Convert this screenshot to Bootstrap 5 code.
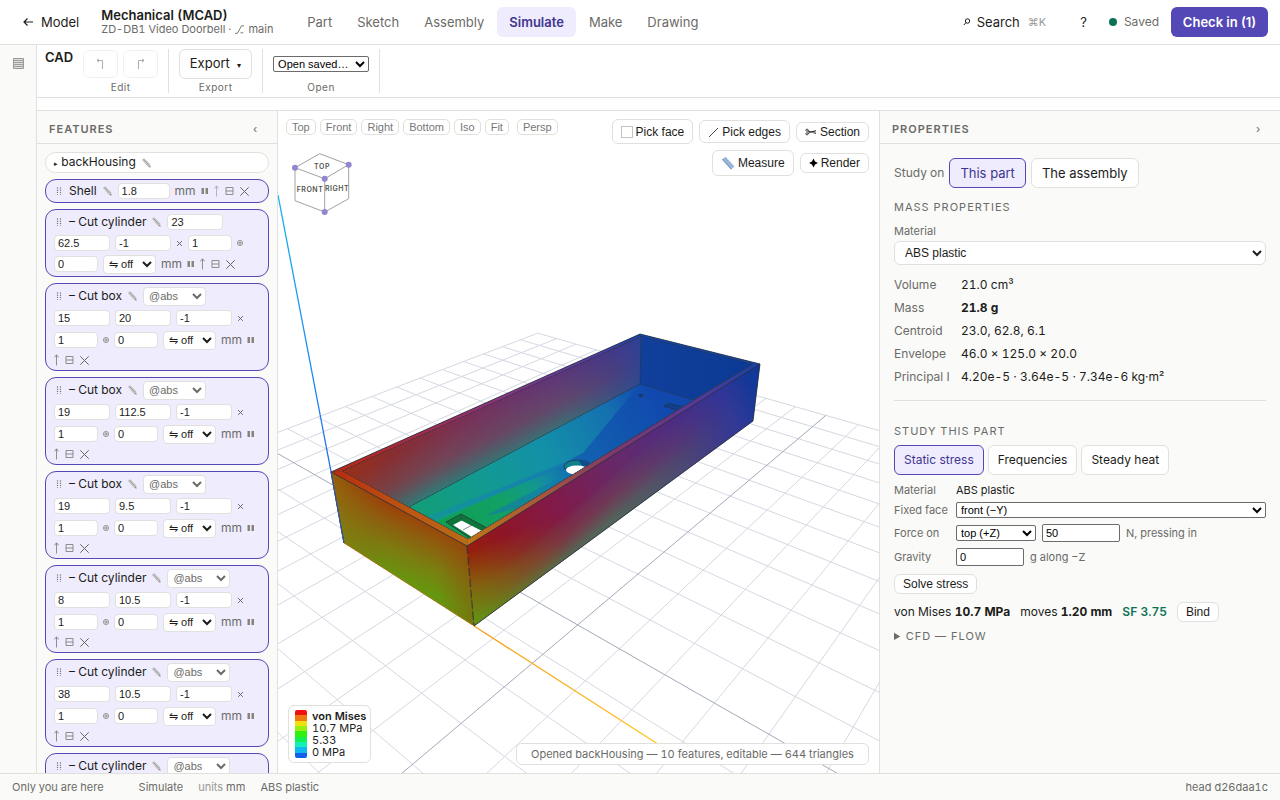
<!DOCTYPE html>
<html lang="en">
<head>
<meta charset="utf-8">
<meta name="viewport" content="width=device-width, initial-scale=1">
<title>Mechanical (MCAD) – ZD-DB1 Video Doorbell</title>
<link href="https://cdn.jsdelivr.net/npm/bootstrap@5.3.0/dist/css/bootstrap.min.css" rel="stylesheet">
<style>
:root{--ink:#1c1c1a;--muted-ink:#6b6b68;--rule:#e0e0dc;--panel:#fafaf8;--accent:#5448b6;--accent-soft:#eeecfd;--accent-ink:#41368f}
body{font-family:Inter,sans-serif;font-size:13px;line-height:16px;color:var(--ink);background:#fff;font-variant-numeric:tabular-nums}
button,select,input{color:inherit}
svg{display:block;flex:none}
.soft{color:var(--muted-ink)}
.fs-11{font-size:11px}.fs-12{font-size:12px}
.rule-b{border-bottom:1px solid var(--rule)}
.topbar{height:45px;padding:0 12px}
.topbar .plain{border:0;background:none;padding:0;color:var(--ink);text-decoration:none}
.topbar .back{padding-left:11px}
.brand-col{line-height:14px;width:192px;padding-left:22px}
.mode-link{padding:0 12px;line-height:30px;border-radius:6px;color:var(--muted-ink);text-decoration:none}
.mode-nav{gap:1px}
.mode-link.active{background:var(--accent-soft);color:var(--accent-ink);font-weight:600}
.topbar .help{margin:0 22px 0 34px}
.live-dot{width:8px;height:8px;border-radius:50%;background:#0b7355;margin-right:7px}
.checkin{background:var(--accent);color:#fff;border:0;border-radius:6px;font-weight:600;height:30px;width:97px;padding:0;margin-left:12px}
.rail{width:37px;background:var(--panel);border-right:1px solid var(--rule);padding-top:13px}
.ribbon{height:53px;padding:4px 8px}
.tool-group{padding:0 10px;border-right:1px solid var(--rule);height:44px}
.tool-group .cap{font-size:10px;letter-spacing:.5px;line-height:12px;color:var(--muted-ink);margin-top:2px}
.tool-group .slot{height:30px}
.box-btn{border:1px solid var(--rule);background:#fff;border-radius:6px;padding:0}
.hist{width:35px;height:28px;opacity:.45}
.native{font-family:"Liberation Sans",sans-serif;font-size:11px;line-height:13px;height:16px;border:1px solid #6b6b6b;border-radius:2px;background:#fff;color:#000;padding:0}
input.native{height:18px;padding:0 3px}
.strip{height:13px}
.side-left{width:241px;background:var(--panel);border-right:1px solid var(--rule)}
.side-right{width:401px;background:var(--panel);border-left:1px solid var(--rule)}
.panel-head{height:33px;padding:3px 12px 0;font-size:11px;color:var(--muted-ink)}
.panel-head h2{font-size:11px;line-height:14px;font-weight:600;letter-spacing:1px;margin:0}
.panel-head button{border:0;background:none;width:20px;padding:0;color:var(--muted-ink)}
.feature-list{padding:8px 8px 0;gap:6px}
.feature{flex:none;border:1px solid var(--accent);background:var(--accent-soft);border-radius:11px;padding:1px 8px;font-size:12px}
.feature.root{border-color:var(--rule);background:#fff;padding-bottom:0}
.feat-row{display:flex;align-items:center;gap:5px;height:22px;white-space:nowrap}
.feat-row.tight{height:20px}.feat-row.last{height:18px}
.feature input,.feature select{font-family:"Liberation Sans",sans-serif;font-size:11px;line-height:12px;height:16px;border:1px solid var(--rule);border-radius:4px;background:#fff;padding:0 4px;min-width:0}
.feature input{padding:0 4px 0 3px}
.feature select{height:19px;padding:0 0 0 1px}
.w-num{width:56px}.w-sm{width:44px}.w-one{width:52px}.w-flip{width:53px}.w-ref{width:63px}
.feature svg,.cube-svg{overflow:visible}
.stage{min-width:0;background:#fff;overflow:hidden}
.scene{position:absolute;inset:0;width:100%;height:100%}
.overlay-top{position:absolute;left:8px;right:10px;top:8px}
.view-btn{font-family:"Liberation Sans",sans-serif;font-size:11px;line-height:14px;border:1px solid var(--rule);border-radius:5px;background:#fff;color:#777;padding:0 5px}
.act-wrap{width:270px;gap:6px}
.act-btn,.mini-btn{font-family:"Liberation Sans",sans-serif;font-size:12px;line-height:14px;border:1px solid var(--rule);border-radius:6px;background:#fff;padding:2px 8px;display:flex;align-items:center;gap:3px}
.legend-card{position:absolute;left:10px;bottom:10px;border:1px solid var(--rule);border-radius:6px;background:#fff;padding:4px 4px 4px 6px;font-size:11px;line-height:12px;gap:5px}
.ramp{width:12px;border-radius:2px;overflow:hidden}
.toast-line{position:absolute;right:10px;bottom:8px;min-width:353px;text-align:center;border:1px solid var(--rule);border-radius:6px;background:rgba(255,255,255,.92);padding:0 8px;font-size:11px;line-height:20px;color:var(--muted-ink);white-space:nowrap}
.props{padding:14px;font-size:12px}
.seg{height:30px;border-radius:6px;padding:0 10px;border:1px solid var(--rule);background:#fff;font-size:13px}
.seg.small-seg{font-size:12px;padding:0 9px}
.seg.on{border-color:var(--accent);background:var(--accent-soft);color:var(--accent-ink)}
.props h3{font-size:11px;line-height:16px;font-weight:400;letter-spacing:1px;color:var(--muted-ink);margin:0}
.props h3.first{margin-top:11px}
.mat-select{font-family:"Liberation Sans",sans-serif;font-size:12px;height:24px;border:1px solid var(--rule);border-radius:6px;background:#fff;padding:0 6px;margin-top:2px}
.mass th,.mass td{padding:0;height:23px;font-weight:400;vertical-align:middle}
.mass th{width:67px;color:var(--muted-ink)}
.seg-row{gap:4px;margin:6px 0 7px}
.study-row{display:grid;grid-template-columns:56px 1fr;column-gap:6px;align-items:center;font-size:11px}
.study-row .fields{gap:6px}
.gap-row{margin-top:6px}
.props hr{margin:12px 0 22px;border-color:var(--rule);opacity:1}
.statusbar{height:27px;border-top:1px solid var(--rule);background:var(--panel);padding:0 12px;font-size:11px;color:var(--muted-ink);gap:15px}
</style>
</head>
<body class="vh-100 d-flex flex-column overflow-hidden">

<svg width="0" height="0" class="position-absolute" aria-hidden="true">
  <defs>
    <symbol id="i-grip" viewBox="0 0 9 10"><g fill="#77776f"><circle cx="3" cy="2" r=".7"/><circle cx="6" cy="2" r=".7"/><circle cx="3" cy="4.200" r=".7"/><circle cx="6" cy="4.200" r=".7"/><circle cx="3" cy="6.400" r=".7"/><circle cx="6" cy="6.400" r=".7"/><circle cx="3" cy="8.600" r=".5"/><circle cx="6" cy="8.600" r=".5"/></g></symbol>
    <symbol id="i-pencil" viewBox="0 0 11 10"><path d="M1.500 1.800 3.300.8 8.600 6.300 9.200 9 6.800 8.200Z" fill="#cfcfcb" stroke="#a3a39e" stroke-width=".6"/><path d="M2.700 1.600 8 7.200" stroke="#8b8b84" stroke-width=".6"/><path d="M8 8.500 9.400 9.200" stroke="#66665f" stroke-width=".7"/></symbol>
    <symbol id="i-pause" viewBox="0 0 8 8"><path d="M.5 1h2.500v6H.5zM4.500 1H7v6H4.500z" fill="#85857e"/></symbol>
    <symbol id="i-up" viewBox="0 0 5 12"><path d="M2.500 11.500V1M.3 3.500 2.500.8 4.700 3.500" fill="none" stroke="#77776f" stroke-width=".8"/></symbol>
    <symbol id="i-minus" viewBox="0 0 11 10"><path d="M2 1.500h7v7H2zM2 5h7" fill="none" stroke="#77776f" stroke-width=".8"/></symbol>
    <symbol id="i-x" viewBox="0 0 9 9"><path d="M.3.3 8.700 8.700M8.700.3.3 8.700" stroke="#66665f" stroke-width="1"/></symbol>
    <symbol id="i-ring" viewBox="1 1 6 6"><circle cx="4" cy="4" r="2.600" fill="none" stroke="#77776f" stroke-width=".7"/><circle cx="4" cy="4" r="1.100" fill="none" stroke="#77776f" stroke-width=".8"/></symbol>
    <symbol id="i-times" viewBox="1 1 5 5"><path d="m1.800 1.800 3.400 3.400m0-3.400L1.800 5.200" stroke="#66665f" stroke-width=".7"/></symbol>
  </defs>
</svg>

<header class="topbar rule-b d-flex align-items-center flex-shrink-0">
  <a href="#" class="plain back d-flex align-items-center">
    <svg width="18" height="10" viewBox="0 0 18 10"><path d="M10 5H1M4.500 1.500 1 5l3.500 3.500" fill="none" stroke="currentColor" stroke-width="1.200"/></svg>Model</a>
  <div class="brand-col d-flex flex-column">
    <span class="fw-semibold text-nowrap">Mechanical (MCAD)</span>
    <span class="fs-11 soft d-flex align-items-center text-nowrap">ZD-DB1 Video Doorbell ·
      <svg class="mx-1" width="9" height="9" viewBox="0 0 9 9"><path d="M0 8.300h2.500L6.500.8H9M5.500 7.800H8.300" fill="none" stroke="currentColor" stroke-width=".9"/></svg>main</span>
  </div>
  <nav class="mode-nav d-flex ms-4">
    <a href="#" class="mode-link">Part</a><a href="#" class="mode-link">Sketch</a><a href="#" class="mode-link">Assembly</a><a href="#" class="mode-link active">Simulate</a><a href="#" class="mode-link">Make</a><a href="#" class="mode-link">Drawing</a>
  </nav>
  <div class="ms-auto d-flex align-items-center">
    <button type="button" class="plain d-flex align-items-center">
      <svg width="14" height="10" viewBox="0 0 14 10"><circle cx="4.500" cy="4" r="2.200" fill="none" stroke="currentColor"/><path d="M3 5.700.8 8" stroke="currentColor"/></svg>Search<span class="fs-11 ms-1 ps-1" style="color:#999">⌘K</span></button>
    <button type="button" class="plain help">?</button>
    <span class="live-dot"></span><span class="fs-12 soft">Saved</span>
    <button type="button" class="checkin">Check in (1)</button>
  </div>
</header>

<div class="d-flex flex-fill" style="min-height:0">
  <aside class="rail flex-shrink-0 d-flex flex-column align-items-center">
    <svg width="11" height="11" viewBox="0 0 11 11"><path d="M.5.500h10v10H.5z" fill="#ddd" stroke="#999"/><path d="M1 2.500h9M1 4.500h9M1 6.500h9M1 8.500h9" stroke="#999" stroke-width=".9"/></svg>
  </aside>
  <div class="flex-fill d-flex flex-column" style="min-width:0">
    <div class="ribbon rule-b d-flex align-items-start flex-shrink-0">
      <span class="fw-semibold">CAD</span>
      <div class="tool-group text-center">
        <div class="slot d-flex align-items-center" style="gap:5px">
          <button type="button" class="box-btn hist" disabled aria-label="Undo"><svg class="mx-auto" width="9" height="12" viewBox="0 0 9 12"><path d="M1 2.500h5.500v8.500M3 .8 1 2.500l2 1.700" fill="none" stroke="currentColor" stroke-width=".8"/></svg></button>
          <button type="button" class="box-btn hist" disabled aria-label="Redo"><svg class="mx-auto" width="9" height="12" viewBox="0 0 9 12"><path d="M8 2.500H2.500v8.500M6 .8l2 1.700-2 1.700" fill="none" stroke="currentColor" stroke-width=".8"/></svg></button>
        </div><div class="cap">Edit</div>
      </div>
      <div class="tool-group text-center">
        <div class="slot"><button type="button" class="box-btn h-100" style="width:73px">Export <small class="ms-1" style="font-size:8px">▾</small></button></div>
        <div class="cap">Export</div>
      </div>
      <div class="tool-group text-center">
        <div class="slot d-flex align-items-center"><select class="native" aria-label="Open saved" style="width:96px"><option>Open saved…</option></select></div>
        <div class="cap">Open</div>
      </div>
    </div>
    <div class="strip rule-b flex-shrink-0"></div>

    <div class="d-flex flex-fill" style="min-height:0">
      <section class="side-left flex-shrink-0 d-flex flex-column">
        <div class="panel-head rule-b d-flex align-items-center justify-content-between flex-shrink-0"><h2>FEATURES</h2><button type="button" aria-label="Collapse features">‹</button></div>
        <div class="feature-list d-flex flex-column overflow-hidden flex-fill" id="features"></div>
      </section>

      <main class="stage flex-fill position-relative">
        <svg class="scene" viewBox="278 111 601 662" preserveAspectRatio="xMidYMid slice" role="img" aria-label="Stress plot of backHousing">
          <defs>
            <linearGradient id="axZ" gradientUnits="userSpaceOnUse" x1="344" y1="543" x2="278" y2="195"><stop offset="0" stop-color="#2450d8"/><stop offset=".4" stop-color="#1a80f4"/><stop offset="1" stop-color="#18b4ee"/></linearGradient>
            <linearGradient id="axX" gradientUnits="userSpaceOnUse" x1="344" y1="543" x2="664" y2="748"><stop offset="0" stop-color="#f08020"/><stop offset="1" stop-color="#ffc61a"/></linearGradient>
            <linearGradient id="front" gradientUnits="userSpaceOnUse" x1="412" y1="508" x2="384" y2="572"><stop offset="0" stop-color="#a13808"/><stop offset=".3" stop-color="#905a0e"/><stop offset=".65" stop-color="#7c7c10"/><stop offset="1" stop-color="#66960f"/></linearGradient>
            <linearGradient id="frontL" gradientUnits="userSpaceOnUse" x1="331" y1="0" x2="474" y2="0"><stop offset="0" stop-color="#8c7a10" stop-opacity=".6"/><stop offset=".4" stop-color="#8a6010" stop-opacity="0"/><stop offset=".75" stop-color="#94380a" stop-opacity="0"/><stop offset="1" stop-color="#94380a" stop-opacity=".35"/></linearGradient>
            <linearGradient id="right" gradientUnits="userSpaceOnUse" x1="467" y1="560" x2="757" y2="392"><stop offset="0" stop-color="#982008"/><stop offset=".12" stop-color="#901524"/><stop offset=".3" stop-color="#821a48"/><stop offset=".55" stop-color="#652a6c"/><stop offset=".75" stop-color="#4c2c84"/><stop offset=".9" stop-color="#31349a"/><stop offset="1" stop-color="#12389a"/></linearGradient>
            <linearGradient id="rightLow" gradientUnits="userSpaceOnUse" x1="574" y1="506" x2="603" y2="540"><stop offset="0" stop-color="#4a8a50" stop-opacity="0"/><stop offset=".35" stop-color="#706048" stop-opacity=".4"/><stop offset=".75" stop-color="#457f58" stop-opacity=".9"/><stop offset="1" stop-color="#3a8a64"/></linearGradient>
            <linearGradient id="rightGreen" gradientUnits="userSpaceOnUse" x1="466" y1="552" x2="492" y2="612"><stop offset="0" stop-color="#856a10" stop-opacity="0"/><stop offset=".55" stop-color="#7c7412" stop-opacity=".9"/><stop offset="1" stop-color="#639610"/></linearGradient>
            <linearGradient id="fadeR" x1="0" x2="1"><stop offset="0" stop-color="#fff"/><stop offset=".5" stop-color="#bbb"/><stop offset=".85" stop-color="#222"/><stop offset="1" stop-color="#000"/></linearGradient>
            <linearGradient id="fadeG" gradientUnits="userSpaceOnUse" x1="467" y1="0" x2="570" y2="0"><stop offset="0" stop-color="#fff"/><stop offset="1" stop-color="#000"/></linearGradient>
            <mask id="mR"><path d="M467 300H760V640H467z" fill="url(#fadeR)"/></mask>
            <mask id="mG"><path d="M460 500H760V640H460z" fill="url(#fadeG)"/></mask>
            <linearGradient id="wall" gradientUnits="userSpaceOnUse" x1="342" y1="0" x2="641" y2="0"><stop offset="0" stop-color="#98301a"/><stop offset=".15" stop-color="#8a2e2e"/><stop offset=".42" stop-color="#7a3058"/><stop offset=".7" stop-color="#603578"/><stop offset=".9" stop-color="#41388a"/><stop offset="1" stop-color="#2c4098"/></linearGradient>
            <linearGradient id="wallLow" gradientUnits="userSpaceOnUse" x1="478" y1="412" x2="502" y2="460"><stop offset="0" stop-color="#6a5560" stop-opacity="0"/><stop offset=".5" stop-color="#665560" stop-opacity=".55"/><stop offset="1" stop-color="#2c7c78"/></linearGradient>
            <linearGradient id="mwl" gradientUnits="userSpaceOnUse" x1="342" y1="0" x2="641" y2="0"><stop offset="0" stop-color="#bbb"/><stop offset=".3" stop-color="#fff"/><stop offset=".75" stop-color="#eee"/><stop offset="1" stop-color="#333"/></linearGradient>
            <mask id="mW"><path d="M340 330H642V512H340z" fill="url(#mwl)"/></mask>
            <linearGradient id="back" x1="0" x2="1"><stop offset="0" stop-color="#11409c"/><stop offset="1" stop-color="#0b3a94"/></linearGradient>
            <linearGradient id="floor" gradientUnits="userSpaceOnUse" x1="420" y1="515" x2="640" y2="388"><stop offset="0" stop-color="#129e78"/><stop offset=".28" stop-color="#129a92"/><stop offset=".55" stop-color="#1390a8"/><stop offset=".85" stop-color="#1570b0"/><stop offset="1" stop-color="#124cb0"/></linearGradient>
            <linearGradient id="floorBlue" gradientUnits="userSpaceOnUse" x1="530" y1="480" x2="660" y2="395"><stop offset="0" stop-color="#1278aa" stop-opacity="0"/><stop offset=".3" stop-color="#1264b0"/><stop offset="1" stop-color="#1148ae"/></linearGradient>
            <linearGradient id="floorGreen" gradientUnits="userSpaceOnUse" x1="440" y1="530" x2="560" y2="475"><stop offset="0" stop-color="#10a050"/><stop offset=".55" stop-color="#12a068"/><stop offset="1" stop-color="#139a8a" stop-opacity="0"/></linearGradient>
            <linearGradient id="streak" gradientUnits="userSpaceOnUse" x1="425" y1="0" x2="575" y2="0"><stop offset="0" stop-color="#1490a8" stop-opacity=".6"/><stop offset="1" stop-color="#1578b0" stop-opacity=".9"/></linearGradient>
            <linearGradient id="rimL" gradientUnits="userSpaceOnUse" x1="331" y1="0" x2="641" y2="0"><stop offset="0" stop-color="#bb2a10"/><stop offset=".2" stop-color="#aa2838"/><stop offset=".55" stop-color="#8a3480"/><stop offset=".85" stop-color="#553aa2"/><stop offset="1" stop-color="#1844aa"/></linearGradient>
            <linearGradient id="rimF" gradientUnits="userSpaceOnUse" x1="331" y1="0" x2="467" y2="0"><stop offset="0" stop-color="#b82a10"/><stop offset=".5" stop-color="#bd5210"/><stop offset="1" stop-color="#b86c18"/></linearGradient>
            <linearGradient id="rimR" gradientUnits="userSpaceOnUse" x1="467" y1="0" x2="758" y2="0"><stop offset="0" stop-color="#bf7415"/><stop offset=".25" stop-color="#a8583a"/><stop offset=".5" stop-color="#80386a"/><stop offset=".8" stop-color="#56389c"/><stop offset="1" stop-color="#1a42a4"/></linearGradient>
            <clipPath id="floorClip"><path d="M640 384 693 400 468 539 409 507Z"/></clipPath>
          </defs>
          <g id="grid" fill="none"></g>
          <path d="M278 195 331 471.500 344 543" fill="none" stroke="url(#axZ)" stroke-width="1.300"/>
          <path d="M474 626 664 748" fill="none" stroke="url(#axX)" stroke-width="1.300"/>
          <path d="M331 472 640 334 760 364 753 421 474 626 344 543Z" fill="#345"/>
          <path d="M342 471 641 336 640 384 409 507Z" fill="url(#wall)"/>
          <path d="M342 471 641 336 640 384 409 507Z" fill="url(#wallLow)" mask="url(#mW)"/>
          <path d="M641 336 753 364 693 400 640 384Z" fill="url(#back)"/>
          <g clip-path="url(#floorClip)">
            <path d="M640 384 693 400 468 539 409 507Z" fill="url(#floor)"/>
            <path d="M432 524 545 472 575 475 468 545Z" fill="url(#floorGreen)"/>
            <path d="M640 384 583 453 530 480 500 530 700 402Z" fill="url(#floorBlue)"/>
            <path d="M424 518 500 488 575 458 555 470 505 491 432 521Z" fill="url(#streak)"/>
            <path d="M485 516 575 470 560 487 520 508Z" fill="#1478ac" opacity=".6"/>
            <path d="M446 522 461 514 487 528 471 539Z" fill="#0d7638" stroke="#243d38" stroke-width=".8"/>
            <path d="M453 525 461.500 520.500 482 531 472 537Z" fill="#fff"/><path d="M461 514V520.500M463 530 472 525" stroke="#2a4a45" stroke-width=".6"/>
            <ellipse cx="578" cy="466.500" rx="14" ry="6.500" fill="#12808c" stroke="#22384a" stroke-width=".8"/>
            <path d="M578 460a14 6.500 0 0 1 12 4l-6 4Z" fill="#0f4c90"/>
            <ellipse cx="577" cy="470" rx="11" ry="4.500" fill="#fff"/>
            <ellipse cx="641" cy="395.500" rx="2.200" ry="1.300" fill="#1b3a80" stroke="#22344a" stroke-width=".7"/>
            <path d="M664 406 669 403.500 690 409 685 413Z" fill="#103f90" stroke="#22344a" stroke-width=".8"/>
          </g>
          <path d="M331 472 640 334 641 336 342 471Z" fill="url(#rimL)"/>
          <path d="M640 334 760 364 753 364 641 336.500Z" fill="#1446ae"/>
          <path d="M331 472 342 471 468 539 467 546Z" fill="url(#rimF)"/>
          <path d="M467 546 468 539 753 364 760 364Z" fill="url(#rimR)"/>
          <path d="M331 472 467 546 474 626 344 543Z" fill="url(#front)"/>
          <path d="M331 472 467 546 474 626 344 543Z" fill="url(#frontL)"/>
          <path d="M467 546 760 364 753 421 474 626Z" fill="url(#right)"/>
          <path d="M467 546 760 364 753 421 474 626Z" fill="url(#rightLow)" mask="url(#mR)"/>
          <path d="M467 546 760 364 753 421 474 626Z" fill="url(#rightGreen)" mask="url(#mG)"/>
          <g fill="none" stroke="#26303a" stroke-width=".9">
            <path d="M331 472 640 334 760 364 467 546ZM760 364 753 421 474 626M331 472 344 543" stroke-opacity=".85"/>
            <path d="M342 471 641 336.500 753 364 468 539ZM641 336 640 384M640 384 409 507" stroke-dasharray="2 1" stroke-opacity=".7"/>
            <path d="M640 384 693 400" stroke-opacity=".4"/>
            <path d="M467 546 474 626" stroke-width="1.300" stroke-dasharray="8 3" stroke-opacity=".65"/>
            <path d="M344 543 474 626" stroke="#d87818" stroke-dasharray="2 1"/>
          </g>
          <path d="M344 543 331 471.500" stroke="#3a55b0"/>
        </svg>

        <div class="overlay-top d-flex align-items-start justify-content-between">
          <div>
            <div class="d-flex" style="gap:4px">
              <button type="button" class="view-btn">Top</button><button type="button" class="view-btn">Front</button><button type="button" class="view-btn">Right</button><button type="button" class="view-btn">Bottom</button><button type="button" class="view-btn">Iso</button><button type="button" class="view-btn">Fit</button><button type="button" class="view-btn ms-1">Persp</button>
            </div>
            <svg class="cube-svg mt-3" width="70" height="66" viewBox="286 151 70 66">
              <path d="M319.700 153.700 348.700 164.700V198.700L324.700 212 295 200.700V167.700ZM295 167.700 324.700 178.700 348.700 164.700M324.700 178.700V212" fill="#fff" stroke="#a3a39c" stroke-width="1"/>
              <g fill="#8f88cf"><circle cx="295" cy="167.700" r="3"/><circle cx="348.700" cy="164.700" r="3"/><circle cx="324.700" cy="178.700" r="3"/><circle cx="324.700" cy="212" r="3"/></g>
              <g font-size="7" font-weight="600" letter-spacing=".5" fill="#55554f" text-anchor="middle"><text x="322" y="169">TOP</text><text x="310" y="192">FRONT</text><text x="337" y="191">RIGHT</text></g>
            </svg>
          </div>
          <div class="act-wrap d-flex flex-wrap justify-content-end align-items-center">
            <button type="button" class="act-btn" style="height:25px"><svg width="12" height="12" viewBox="0 0 12 12"><path d="M.5.500h11v11H.5z" fill="none" stroke="#888" stroke-dasharray="1 1"/></svg>Pick face</button>
            <button type="button" class="act-btn" style="height:23px"><svg width="11" height="12" viewBox="0 0 11 12"><path d="M1 11 10 2" stroke="#333" stroke-width=".9"/></svg>Pick edges</button>
            <button type="button" class="act-btn"><svg width="12" height="10" viewBox="0 0 12 10"><g fill="none" stroke="currentColor" stroke-width=".8"><circle cx="2" cy="3.200" r="1.100"/><circle cx="2" cy="6.800" r="1.100"/><path d="M3 3.700 5.500 5 11 6.300M3 6.300 5.500 5 11 3.700" stroke-width="1.100"/></g></svg>Section</button>
            <button type="button" class="act-btn" style="height:26px"><svg width="14" height="14" viewBox="0 0 14 14"><path d="M1 3.500 4.500 .8 13.500 10.500 10 13.500Z" fill="#9dbbdc"/><path d="M1 3.500 10 13.500l.8-.8L2 2.800Z" fill="#7f9fc4"/><path d="m5.500 2-1.300 1.200M7.300 4 6 5.200M9.100 6 7.800 7.200M10.900 8 9.600 9.200" stroke="#6d8db0" stroke-width=".6"/></svg>Measure</button>
            <button type="button" class="act-btn"><svg width="9" height="10" viewBox="0 0 9 10"><path d="M4.500.5 6 3.500 9 5 6 6.500 4.500 9.500 3 6.500 0 5 3 3.500Z"/></svg>Render</button>
          </div>
        </div>

        <div class="legend-card d-flex">
          <svg class="ramp" width="12" height="48" viewBox="0 0 12 9" preserveAspectRatio="none" shape-rendering="crispEdges"><path fill="#f01010" d="M0 0h12v1H0z"/><path fill="#f07810" d="M0 1h12v1H0z"/><path fill="#f0e010" d="M0 2h12v1H0z"/><path fill="#98f010" d="M0 3h12v1H0z"/><path fill="#30f010" d="M0 4h12v1H0z"/><path fill="#10f050" d="M0 5h12v1H0z"/><path fill="#10f0b8" d="M0 6h12v1H0z"/><path fill="#10b8f0" d="M0 7h12v1H0z"/><path fill="#1060f0" d="M0 8h12v1H0z"/></svg>
          <div><div class="fw-semibold">von Mises</div><div>10.7 MPa</div><div>5.33</div><div>0 MPa</div></div>
        </div>
        <div class="toast-line">Opened backHousing — 10 features, editable — 644 triangles</div>
      </main>

      <section class="side-right flex-shrink-0 d-flex flex-column">
        <div class="panel-head rule-b d-flex align-items-center justify-content-between flex-shrink-0"><h2>PROPERTIES</h2><button type="button" aria-label="Collapse properties">›</button></div>
        <div class="props">
          <div class="d-flex align-items-center" style="gap:5px"><span class="soft">Study on</span>
            <button type="button" class="seg on">This part</button><button type="button" class="seg">The assembly</button></div>
          <h3 class="first">MASS PROPERTIES</h3>
          <label for="material" class="d-block fs-11 soft mt-2">Material</label>
          <select id="material" class="mat-select w-100 d-block"><option>ABS plastic</option></select>
          <table class="mass w-100 mt-2">
            <tbody>
            <tr><th scope="row">Volume</th><td>21.0 cm³</td></tr>
            <tr><th scope="row">Mass</th><td><b>21.8 g</b></td></tr>
            <tr><th scope="row">Centroid</th><td>23.0, 62.8, 6.1</td></tr>
            <tr><th scope="row">Envelope</th><td>46.0 × 125.0 × 20.0</td></tr>
            <tr><th scope="row" class="text-nowrap">Principal I</th><td>4.20e-5 · 3.64e-5 · 7.34e-6 kg·m²</td></tr>
            </tbody>
          </table>
          <hr>
          <h3>STUDY THIS PART</h3>
          <div class="seg-row d-flex"><button type="button" class="seg small-seg on">Static stress</button><button type="button" class="seg small-seg">Frequencies</button><button type="button" class="seg small-seg">Steady heat</button></div>
          <div class="study-row"><span class="soft">Material</span><span>ABS plastic</span></div>
          <div class="study-row mt-1"><label for="fixed" class="soft text-nowrap">Fixed face</label><select id="fixed" class="native w-100"><option>front (−Y)</option></select></div>
          <div class="study-row gap-row"><label for="force" class="soft">Force on</label><div class="fields d-flex align-items-center soft"><select id="force" class="native" style="width:80px"><option>top (+Z)</option></select><input class="native" value="50" aria-label="Force in newtons" style="width:78px"><span>N, pressing in</span></div></div>
          <div class="study-row gap-row"><label for="gravity" class="soft">Gravity</label><div class="fields d-flex align-items-center soft"><input id="gravity" class="native" value="0" style="width:68px"><span>g along −Z</span></div></div>
          <button type="button" class="mini-btn mt-2">Solve stress</button>
          <div class="d-flex align-items-center mt-2" style="gap:10px"><span>von Mises <b>10.7 MPa</b></span><span>moves <b>1.20 mm</b></span><span class="fw-semibold" style="color:#0b7355">SF 3.75</span><button type="button" class="mini-btn">Bind</button></div>
          <details class="fs-11 soft gap-row"><summary style="letter-spacing:1px">CFD — FLOW</summary></details>
        </div>
      </section>
    </div>
  </div>
</div>

<footer class="statusbar d-flex align-items-center flex-shrink-0">
  <span>Only you are here</span><span class="ms-3 ps-1">Simulate</span><span><span style="color:#999">units</span> mm</span><span>ABS plastic</span>
  <span class="ms-auto">head d26daa1c</span>
</footer>

<script src="https://cdn.jsdelivr.net/npm/bootstrap@5.3.0/dist/js/bootstrap.bundle.min.js"></script>
<script>
// Ground grid, projected through the camera's plane homography.
const project = (x, y) => {
  const a = -0.003216 * x, b = 0.003926 * y, w = 1 + a + b;
  return [(344 - 402 * a + 1241 * b) / w, (543 + 65 * a + 65 * b) / w].map(v => v.toFixed(1));
};
const grid = { cx: 62.6, cy: 14, half: 130, cells: 12 };
let fine = '', main = '';
for (let i = -grid.cells; i <= grid.cells; i++) {
  const o = i * grid.half / grid.cells, h = grid.half;
  const d = `M${project(grid.cx + o, grid.cy - h)}L${project(grid.cx + o, grid.cy + h)}M${project(grid.cx - h, grid.cy + o)}L${project(grid.cx + h, grid.cy + o)}`;
  if (i) fine += d; else main += d;
}
document.getElementById('grid').innerHTML = `<path d="${fine}" stroke="#d5d8e2"/><path d="${main}" stroke="#a2a9b8"/>`;

// Feature tree.
const icon = (n, w, h, o = 1) => `<svg width="${w}" height="${h}" opacity="${o}"><use href="#i-${n}"/></svg>`;
const grip = icon('grip', 10, 10), pencil = icon('pencil', 11, 10), times = icon('times', 7, 7), ring = icon('ring', 6, 6);
const num = (v, c, l) => `<input class="${c}" value="${v}" aria-label="${l}">`;
const flip = '<select class="w-flip" aria-label="Flip"><option>⇋ off</option></select>';
const ref = '<select class="w-ref soft" aria-label="Reference"><option>@abs</option></select>';
const mm = '<span class="soft">mm</span>';
const tail = o => icon('up', 5, 12, o) + icon('minus', 11, 10) + icon('x', 9, 9);
const card = (...rows) => `<div class="feature">${rows.join('')}</div>`;
const row = (s, c = '') => `<div class="feat-row ${c}">${s}</div>`;
const cut = (name, a, b) => card(
  row(`${grip}<span>– ${name}</span>${pencil}${ref}`),
  row(num(a, 'w-num', 'X') + num(b, 'w-num', 'Y') + num(-1, 'w-num', 'Z') + times),
  row(num(1, 'w-sm', 'Count') + ring + num(0, 'w-sm', 'Angle') + flip + mm + icon('pause', 8, 8)),
  row(tail(1), 'last'));
document.getElementById('features').innerHTML =
  `<div class="feature root">${row('<span><small style="font-size:7px">▸</small> backHousing</span>' + pencil, 'last')}</div>` +
  card(row(grip + '<span>Shell</span>' + pencil + num('1.8', 'w-one', 'Thickness') + mm + icon('pause', 8, 8) + tail(.6), 'tight')) +
  card(row(`${grip}<span>– Cut cylinder</span>${pencil}${num(23, 'w-num', 'X')}`),
       row(num(62.5, 'w-num', 'Y') + num(-1, 'w-num', 'Z') + times + num(1, 'w-sm', 'Count') + ring, 'tight'),
       row(num(0, 'w-sm', 'Angle') + flip + mm + icon('pause', 8, 8) + tail(1))) +
  cut('Cut box', 15, 20) + cut('Cut box', 19, 112.5) + cut('Cut box', 19, 9.5) +
  cut('Cut cylinder', 8, 10.5) + cut('Cut cylinder', 38, 10.5) + cut('Cut cylinder', 8, 114.5);
</script>
</body>
</html>
